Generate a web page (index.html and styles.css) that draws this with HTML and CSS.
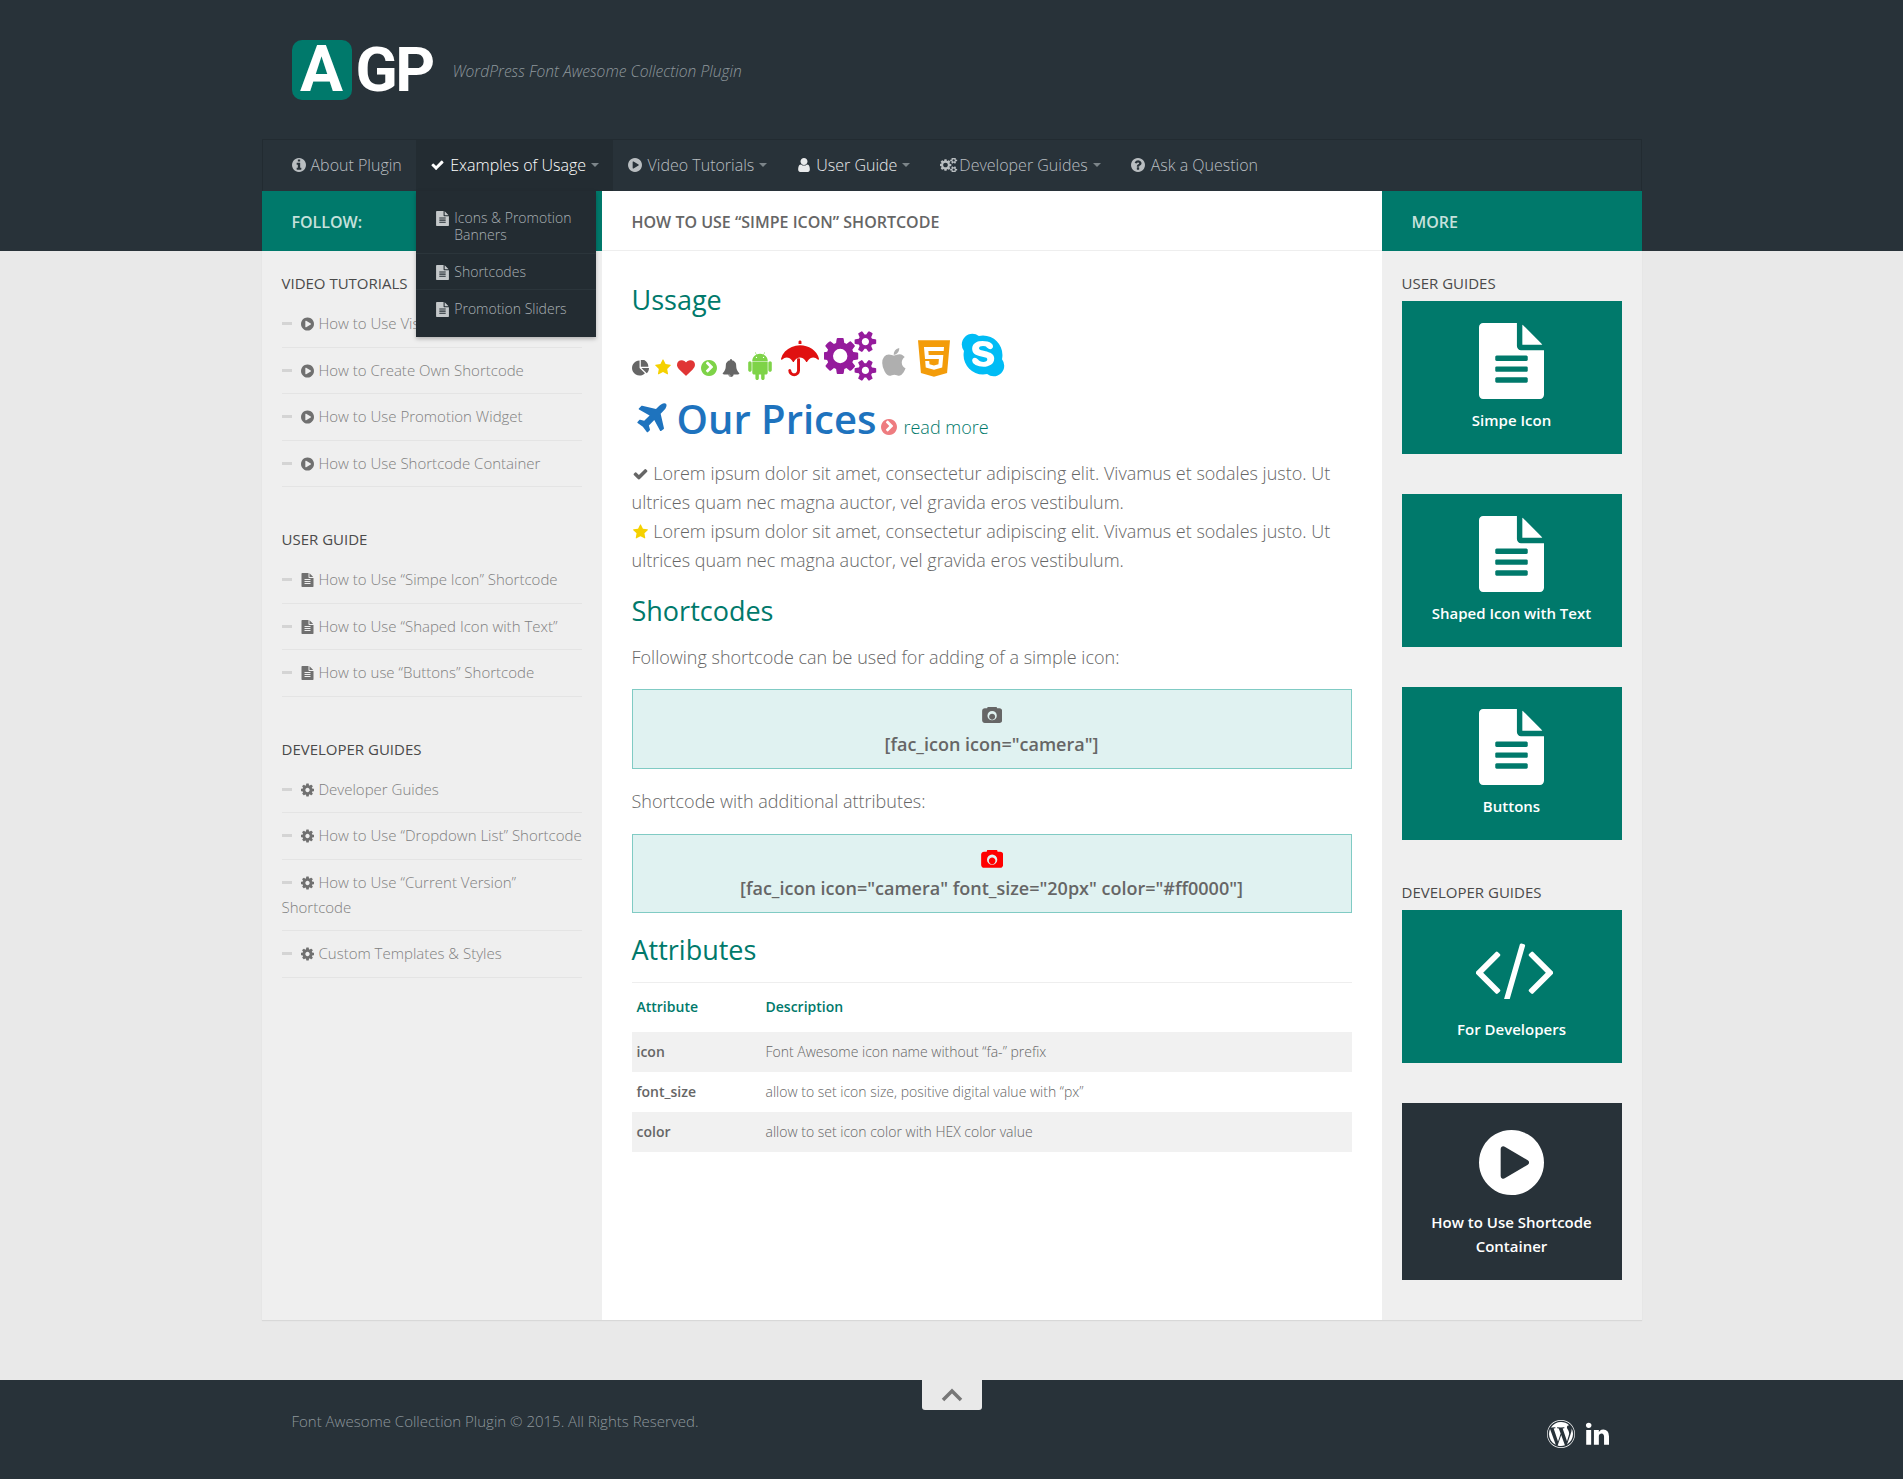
FILE: index.html
```html
<!DOCTYPE html>
<html lang="en">
<head>
<meta charset="utf-8">
<title>AGP - WordPress Font Awesome Collection Plugin</title>
<link rel="stylesheet" href="styles.css">
</head>
<body>
<svg class="defs" aria-hidden="true">
<symbol id="i-check" viewBox="0 0 1792 1792"><path d="M1671 566q0 40-28 68l-724 724-136 136q-28 28-68 28t-68-28l-136-136-362-362q-28-28-28-68t28-68l136-136q28-28 68-28t68 28l294 295 656-657q28-28 68-28t68 28l136 136q28 28 28 68z"/></symbol>
<symbol id="i-star" viewBox="0 0 1664 1792"><path d="M1664 647q0 22-26 48l-363 354 86 500q1 7 1 20 0 21-10.500 35.500t-30.500 14.500q-19 0-40-12l-449-236-449 236q-22 12-40 12-21 0-31.500-14.500t-10.500-35.500q0-6 2-20l86-500-364-354q-25-27-25-48 0-37 56-46l502-73 225-455q19-41 49-41t49 41l225 455 502 73q56 9 56 46z"/></symbol>
<symbol id="i-heart" viewBox="0 0 1792 1792"><path d="M896 1664q-26 0-44-18l-624-602q-10-8-27.500-26t-55.500-65.500-68-97.500-53.500-121-23.500-138q0-220 127-344t351-124q62 0 126.500 21.500t120 58 95.500 68.500 76 68q36-36 76-68t95.500-68.500 120-58 126.500-21.500q224 0 351 124t127 344q0 221-229 450l-623 600q-18 18-44 18z"/></symbol>
<symbol id="i-play" viewBox="128 128 1536 1536"><path d="M896 128q209 0 385.500 103t279.500 279.500 103 385.500-103 385.500-279.500 279.500-385.500 103-385.500-103-279.500-279.500-103-385.500 103-385.500 279.500-279.500 385.500-103zm384 823q32-18 32-55t-32-55l-544-320q-31-19-64-1-32 19-32 56v640q0 37 32 56 16 8 32 8 17 0 32-9z"/></symbol>
<symbol id="i-info" viewBox="128 128 1536 1536"><path d="M1152 1376v-160q0-14-9-23t-23-9h-96v-512q0-14-9-23t-23-9h-320q-14 0-23 9t-9 23v160q0 14 9 23t23 9h96v320h-96q-14 0-23 9t-9 23v160q0 14 9 23t23 9h448q14 0 23-9t9-23zm-128-896v-160q0-14-9-23t-23-9h-192q-14 0-23 9t-9 23v160q0 14 9 23t23 9h192q14 0 23-9t9-23zm640 416q0 209-103 385.500t-279.500 279.500-385.500 103-385.500-103-279.500-279.500-103-385.500 103-385.500 279.500-279.500 385.500-103 385.500 103 279.500 279.500 103 385.500z"/></symbol>
<symbol id="i-question" viewBox="128 128 1536 1536"><path d="M1024 1376v-192q0-14-9-23t-23-9h-192q-14 0-23 9t-9 23v192q0 14 9 23t23 9h192q14 0 23-9t9-23zm256-672q0-88-55.500-163t-138.500-116-170-41q-243 0-371 213-15 24 8 42l132 100q7 6 19 6 16 0 25-12 53-68 86-92 34-24 86-24 48 0 85.500 26t37.500 59q0 38-20 61t-68 45q-63 28-115.500 86.500t-52.500 125.500v36q0 14 9 23t23 9h192q14 0 23-9t9-23q0-19 21.500-49.500t54.500-49.500q32-18 49-28.500t46-35 44.500-48 28-60.500 12.500-81zm384 192q0 209-103 385.500t-279.500 279.500-385.500 103-385.500-103-279.500-279.500-103-385.500 103-385.500 279.500-279.500 385.500-103 385.500 103 279.500 279.500 103 385.500z"/></symbol>
<symbol id="i-user" viewBox="128 128 1536 1536"><path d="M1536 1399q0 109-62.500 187t-150.500 78h-854q-88 0-150.500-78t-62.500-187q0-85 8.500-160.500t31.500-152 58.500-131 94-89 134.500-34.500q131 128 313 128t313-128q76 0 134.500 34.500t94 89 58.500 131 31.500 152 8.500 160.500zm-256-887q0 159-112.500 271.500t-271.500 112.500-271.500-112.500-112.500-271.500 112.500-271.500 271.500-112.500 271.500 112.500 112.500 271.500z"/></symbol>
<symbol id="i-cog" viewBox="128 128 1536 1536"><path fill-rule="evenodd" d="M1152 896q0-106-75-181t-181-75-181 75-75 181 75 181 181 75 181-75 75-181zm512-109v222q0 12-8 23t-20 13l-185 28q-19 54-39 91 35 50 107 138 10 12 10 25t-9 23q-27 37-99 108t-94 71q-12 0-26-9l-138-108q-44 23-91 38-16 136-29 186-7 28-36 28h-222q-14 0-24.500-8.500t-11.500-21.500l-28-184q-49-16-90-37l-141 107q-10 9-25 9-14 0-25-11-126-114-165-168-7-10-7-23 0-12 8-23 15-21 51-66.500t54-70.500q-27-50-41-99l-183-27q-13-2-21-12.500t-8-23.500v-222q0-12 8-23t19-13l186-28q14-46 39-92-40-57-107-138-10-12-10-24 0-10 9-23 26-36 98.500-107.500t94.500-71.500q13 0 26 10l138 107q44-23 91-38 16-136 29-186 7-28 36-28h222q14 0 24.500 8.500t11.500 21.500l28 184q49 16 90 37l142-107q9-9 24-9 13 0 25 10 129 119 165 170 7 8 7 22 0 12-8 23-15 21-51 66.500t-54 70.500q26 50 41 98l183 28q13 2 21 12.500t8 23.500z"/></symbol>
<symbol id="i-cogs" viewBox="0 128 1920 1536"><path fill-rule="evenodd" d="M832 896q0-106-75-181t-181-75-181 75-75 181 75 181 181 75 181-75 75-181zm768 512q0-52-38-90t-90-38-90 38-38 90q0 53 37.500 90.500t90.500 37.500 90.500-37.500 37.500-90.500zm0-1024q0-52-38-90t-90-38-90 38-38 90q0 53 37.500 90.500t90.500 37.500 90.500-37.500 37.500-90.500zm-384 421v185q0 10-7 19.500t-16 10.500l-155 24q-11 35-32 76 34 48 90 115 7 11 7 20 0 12-7 19-23 30-82.500 89.500t-78.500 59.500q-11 0-21-7l-115-90q-37 19-77 31-11 108-23 155-7 24-30 24h-186q-11 0-20-7.500t-10-17.500l-23-153q-34-10-75-31l-118 89q-7 7-20 7-11 0-21-8-144-133-144-160 0-9 7-19 10-14 41-53t47-61q-23-44-35-82l-152-24q-10-1-17-9.500t-7-19.500v-185q0-10 7-19.500t16-10.500l155-24q11-35 32-76-34-48-90-115-7-11-7-20 0-12 7-20 22-30 82-89t79-59q11 0 21 7l115 90q34-18 77-32 11-108 23-154 7-24 30-24h186q11 0 20 7.500t10 17.500l23 153q34 10 75 31l118-89q8-7 20-7 11 0 21 8 144 133 144 160 0 8-7 19-12 16-42 54t-45 60q23 48 34 82l152 23q10 2 17 10.500t7 19.500zm640 533v140q0 16-149 31-12 27-30 52 51 113 51 138 0 4-4 7-122 71-124 71-8 0-46-47t-52-68q-20 2-30 2t-30-2q-14 21-52 68t-46 47q-2 0-124-71-4-3-4-7 0-25 51-138-18-25-30-52-149-15-149-31v-140q0-16 149-31 13-29 30-52-51-113-51-138 0-4 4-7 4-2 35-20t59-34 30-16q8 0 46 46.500t52 67.500q20-2 30-2t30 2q51-71 92-112l6-2q4 0 124 70 4 3 4 7 0 25-51 138 17 23 30 52 149 15 149 31zm0-1024v140q0 16-149 31-12 27-30 52 51 113 51 138 0 4-4 7-122 71-124 71-8 0-46-47t-52-68q-20 2-30 2t-30-2q-14 21-52 68t-46 47q-2 0-124-71-4-3-4-7 0-25 51-138-18-25-30-52-149-15-149-31v-140q0-16 149-31 13-29 30-52-51-113-51-138 0-4 4-7 4-2 35-20t59-34 30-16q8 0 46 46.500t52 67.500q20-2 30-2t30 2q51-71 92-112l6-2q4 0 124 70 4 3 4 7 0 25-51 138 17 23 30 52 149 15 149 31z"/></symbol>
<symbol id="i-doc" viewBox="128 0 1536 1792"><path d="M1596 476q14 14 28 36h-472v-472q22 14 36 28zm-476 164h544v1056q0 40-28 68t-68 28h-1344q-40 0-68-28t-28-68v-1600q0-40 28-68t68-28h800v544q0 40 28 68t68 28zm160 736v-64q0-14-9-23t-23-9h-704q-14 0-23 9t-9 23v64q0 14 9 23t23 9h704q14 0 23-9t9-23zm0-256v-64q0-14-9-23t-23-9h-704q-14 0-23 9t-9 23v64q0 14 9 23t23 9h704q14 0 23-9t9-23zm0-256v-64q0-14-9-23t-23-9h-704q-14 0-23 9t-9 23v64q0 14 9 23t23 9h704q14 0 23-9t9-23z"/></symbol>
<symbol id="i-camera" viewBox="0 128 1920 1536"><path fill-rule="evenodd" d="M972 768q119 0 203.500 84.500t84.500 203.500-84.500 203.500-203.500 84.500-203.500-84.500-84.500-203.500 84.500-203.500 203.500-84.500zm704-512q106 0 181 75t75 181v896q0 106-75 181t-181 75h-1408q-106 0-181-75t-75-181v-896q0-106 75-181t181-75h224l51-136q19-49 69.500-84.500t103.500-35.500h512q53 0 103.500 35.500t69.500 84.500l51 136h224zm-704 1152q185 0 316.500-131.500t131.500-316.500-131.500-316.500-316.500-131.500-316.500 131.500-131.500 316.500 131.500 316.500 316.500 131.500z"/></symbol>
<symbol id="i-plane" viewBox="128 128 1536 1536"><path d="M1568 160q44 52 12 148t-108 172l-161 161 160 696q5 19-12 33l-128 96q-7 6-19 6-4 0-7-1-15-3-21-16l-279-508-259 259 53 194q5 17-8 31l-96 96q-9 9-23 9h-2q-15-2-24-13l-189-252-252-189q-11-7-13-23-1-13 9-25l96-97q9-9 23-9 6 0 8 1l194 53 259-259-508-279q-14-8-17-24-2-16 9-27l128-128q14-13 30-8l665 159 160-160q76-76 172-108t148 12z"/></symbol>
<symbol id="i-bell" viewBox="0 0 1792 1792"><path d="M912 1696q0-16-16-16-59 0-101.500-42.500t-42.500-101.500q0-16-16-16t-16 16q0 73 51.500 124.500t124.500 51.500q16 0 16-16zm816-288q0 52-38 90t-90 38h-448q0 106-75 181t-181 75-181-75-75-181h-448q-52 0-90-38t-38-90q50-42 91-88t85-119.500 74.500-158.500 50-206 19.500-260q0-152 117-282.500t307-158.500q-8-19-8-39 0-40 28-68t68-28 68 28 28 68q0 20-8 39 190 28 307 158.500t117 282.500q0 139 19.500 260t50 206 74.500 158.500 85 119.500 91 88z"/></symbol>
<symbol id="i-chev" viewBox="128 128 1536 1536"><path fill-rule="evenodd" d="M813 1299l454-454q19-19 19-45t-19-45l-454-454q-19-19-45-19t-45 19l-102 102q-19 19-19 45t19 45l307 307-307 307q-19 19-19 45t19 45l102 102q19 19 45 19t45-19zm851-403q0 209-103 385.500t-279.500 279.500-385.500 103-385.500-103-279.500-279.500-103-385.500 103-385.500 279.500-279.500 385.500-103 385.500 103 279.500 279.500 103 385.500z"/></symbol>
<symbol id="i-pie" viewBox="0 128 1728 1536"><path d="M768 890l546 546q-106 108-247.500 168t-298.500 60q-209 0-385.500-103t-279.500-279.500-103-385.500 103-385.500 279.500-279.500 385.500-103v762zm187 6h773q0 157-60 298.500t-168 247.500zm709-128h-768v-768q209 0 385.500 103t279.500 279.500 103 385.500z"/></symbol>
<symbol id="i-android" viewBox="0 0 1408 1792"><path d="M493 483q16 0 27.500-11.500t11.500-27.500-11.500-27.500-27.500-11.500-27 11.500-11 27.500 11 27.500 27 11.500zm422 0q16 0 27-11.500t11-27.500-11-27.500-27-11.500-27.500 11.500-11.500 27.500 11.500 27.500 27.500 11.500zm-812 184q42 0 72 30t30 72v430q0 43-29.500 73t-72.500 30-73-30-30-73v-430q0-42 30-72t73-30zm1060 19v666q0 46-32 78t-77 32h-75v227q0 43-30 73t-73 30-73-30-30-73v-227h-138v227q0 43-30 73t-73 30q-42 0-72-30t-30-73l-1-227h-74q-46 0-78-32t-32-78v-666h918zm-232-405q107 55 171 153.500t64 215.500h-925q0-117 64-215.500t172-153.500l-71-131q-7-13 5-20 13-6 20 6l72 132q95-42 201-42t201 42l72-132q7-12 20-6 12 7 5 20zm477 488v430q0 43-30 73t-73 30q-42 0-72-30t-30-73v-430q0-43 30-72.500t72-29.500q43 0 73 29.500t30 72.500z"/></symbol>
<symbol id="i-umbrella" viewBox="0 0 1664 1792"><path d="M832 853v522q0 104-76 180t-180 76-180-76-76-180q0-26 19-45t45-19 45 19 19 45q0 50 39 89t89 39 89-39 39-89v-522q33-11 64-11t64 11zm832 22q0 13-9.500 22.500t-22.500 9.500q-11 0-23-10-49-46-93-69t-102-23q-68 0-128 37t-103 97q-7 10-17.500 28t-14.500 24q-11 17-28 17-18 0-29-17-4-6-14.500-24t-17.500-28q-43-60-102.500-97t-127.500-37-127.500 37-102.500 97q-7 10-17.500 28t-14.500 24q-11 17-29 17-17 0-28-17-4-6-14.500-24t-17.500-28q-43-60-103-97t-128-37q-58 0-102 23t-93 69q-12 10-23 10-13 0-22.500-9.500t-9.500-22.500q0-5 1-7 45-183 172.500-319.500t298-204.500 360.500-68q140 0 274.500 40t246.500 113.500 194.500 187 115.500 251.500q1 2 1 7zm-768-751v98q-42-2-64-2t-64 2v-98q0-26 19-45t45-19 45 19 19 45z"/></symbol>
<symbol id="i-apple" viewBox="0 0 1408 1792"><path d="M1393 1215q-39 125-123 250-129 196-257 196-49 0-140-32-86-32-151-32-61 0-142 33-81 34-132 34-152 0-301-259-147-261-147-503 0-228 113-374 113-144 284-144 72 0 177 30 104 30 138 30 45 0 143-34 102-34 173-34 119 0 213 65 52 36 104 100-79 67-114 118-65 94-65 207 0 124 69 223t158 126zm-376-1173q0 61-29 136-30 75-93 138-54 54-108 72-37 11-104 17 3-149 78-257 74-107 250-148 1 3 2.500 11t2.500 11q0 4 .5 10t.5 10z"/></symbol>
<symbol id="i-html5" viewBox="0 128 1408 1602"><path fill-rule="evenodd" d="M1130 597l16-175h-884l47 534h612l-22 228-197 53-196-53-13-140h-175l22 278 362 100h4v-1l359-99 50-544h-644l-15-181h674zm-1130-469h1408l-128 1438-578 162-574-162z"/></symbol>
<symbol id="i-skype" viewBox="0 64 1536 1664"><path fill-rule="evenodd" d="M1173 1063q0-50-19.500-91.500t-48.500-68.500-73-49-82.500-34-87.500-23l-104-24q-30-7-44-10.500t-35-11.500-30-16-16.500-21-7.500-30q0-77 144-77 43 0 77 12t54 28.500 38 33.500 40 29 48 12q47 0 75.500-32t28.500-77q0-55-56-99.500t-142-67.500-182-23q-68 0-132 15.500t-119.500 47-89 87-33.500 128.500q0 61 19 106.500t56 75.500 80 48.500 103 32.500l146 36q90 22 112 36 32 20 32 60 0 39-40 64.500t-105 25.500q-51 0-91.500-16t-65-38.500-45.500-45-46-38.500-54-16q-50 0-75.500 30t-25.500 75q0 92 122 157.500t291 65.500q73 0 140-18.500t122.500-53.500 88.500-93.500 33-131.500zm363 255q0 159-112.500 271.500t-271.500 112.500q-130 0-234-80-77 16-150 16-143 0-273.500-55.500t-225-150-150-225-55.500-273.500q0-73 16-150-80-104-80-234 0-159 112.500-271.500t271.500-112.500q130 0 234 80 77-16 150-16 143 0 273.500 55.500t225 150 150 225 55.500 273.500q0 73-16 150 80 104 80 234z"/></symbol>
<symbol id="i-code" viewBox="55 240 1810 1312"><path d="M617 1399l-50 50q-10 10-23 10t-23-10l-466-466q-10-10-10-23t10-23l466-466q10-10 23-10t23 10l50 50q10 10 10 23t-10 23l-393 393 393 393q10 10 10 23t-10 23zm591-1067l-373 1291q-4 13-15.500 19.500t-23.500 2.500l-62-17q-13-4-19.500-15.500t-2.500-24.500l373-1291q4-13 15.500-19.500t23.500-2.500l62 17q13 4 19.500 15.500t2.500 24.500zm657 651l-466 466q-10 10-23 10t-23-10l-50-50q-10-10-10-23t10-23l393-393-393-393q-10-10-10-23t10-23l50-50q10-10 23-10t23 10l466 466q10 10 10 23t-10 23z"/></symbol>
<symbol id="i-wp" viewBox="0 0 1792 1792"><path fill-rule="evenodd" d="M127 896q0-163 67-313l367 1005q-196-95-315-281t-119-411zm1288-39q0 19-2.500 38.500t-10 49.500-11.500 44-17.500 59-17.500 58l-76 256-278-826q46-3 88-8 19-2 26-18.500t-2.500-31-28.500-13.500l-205 10q-75-1-202-10-12-1-20.500 5t-11.500 15-1.500 18.500 9 16.500 19.500 8l80 8 120 328-168 504-280-832q46-3 88-8 19-2 26-18.500t-2.500-31-28.500-13.500l-205 10q-7 0-23-.5t-26-.5q105-160 274.500-253.500t367.500-93.500q147 0 280.500 53t238.500 149h-10q-55 0-92 40.500t-37 95.500q0 12 2 24t4 21.500 8 23 9 21 12 22.500 12.500 21 14.500 24 14 23q63 107 63 212zm-506 106l237 647q1 6 5 11-126 44-255 44-112 0-217-32zm661-436q95 174 95 369 0 209-104 385.500t-279 278.500l235-678q59-169 59-276 0-42-6-79zm-674-527q182 0 348 71t286 191 191 286 71 348-71 348-191 286-286 191-348 71-348-71-286-191-191-286-71-348 71-348 191-286 286-191 348-71zm0 1751q173 0 331.500-68t273-182.500 182.500-273 68-331.500-68-331.500-182.500-273-273-182.500-331.500-68-331.500 68-273 182.500-182.500 273-68 331.500 68 331.500 182.500 273 273 182.500 331.500 68z"/></symbol>
<symbol id="i-in" viewBox="0 128 1664 1536"><path d="M477 625v991h-330v-991h330zm21-306q1 73-50.500 122t-135.500 49h-2q-82 0-132-49t-50-122q0-74 51.500-122.500t134.500-48.500 133 48.500 51 122.500zm1166 729v568h-329v-530q0-105-40.500-164.500t-126.500-59.500q-63 0-105.500 34.500t-63.500 85.500q-11 30-11 81v553h-329q2-399 2-647t-1-296l-1-48h329v144h-2q20-32 41-56t56.500-52 87-43.500 114.500-15.500q171 0 275 113.500t104 332.500z"/></symbol>
</svg>

<div class="wrap">
  <header class="brand">
    <div class="logo"><span class="logo-a">A</span><span class="logo-gp">GP</span></div>
    <p class="tagline">WordPress Font Awesome Collection Plugin</p>
  </header>

  <nav class="nav">
    <a class="nav-item first"><svg class="ni"><use href="#i-info"/></svg>About Plugin</a>
    <div class="nav-item active"><svg class="ni"><use href="#i-check"/></svg>Examples of Usage<i class="caret"></i>
      <ul class="drop">
        <li><svg class="di"><use href="#i-doc"/></svg><span>Icons &amp; Promotion Banners</span></li>
        <li><svg class="di"><use href="#i-doc"/></svg><span>Shortcodes</span></li>
        <li><svg class="di"><use href="#i-doc"/></svg><span>Promotion Sliders</span></li>
      </ul>
    </div>
    <a class="nav-item"><svg class="ni"><use href="#i-play"/></svg>Video Tutorials<i class="caret"></i></a>
    <a class="nav-item bright"><svg class="ni"><use href="#i-user"/></svg>User Guide<i class="caret"></i></a>
    <a class="nav-item"><svg class="ni wide"><use href="#i-cogs"/></svg>Developer Guides<i class="caret"></i></a>
    <a class="nav-item"><svg class="ni"><use href="#i-question"/></svg>Ask a Question</a>
  </nav>

  <div class="cols">
    <aside class="left">
      <div class="bar bar-teal bar-left">FOLLOW:</div>
      <div class="side">
        <h4 class="side-title">VIDEO TUTORIALS</h4>
        <ul class="links">
          <li><i class="dash"></i><svg class="li"><use href="#i-play"/></svg>How to Use Visual Editor</li>
          <li><i class="dash"></i><svg class="li"><use href="#i-play"/></svg>How to Create Own Shortcode</li>
          <li><i class="dash"></i><svg class="li"><use href="#i-play"/></svg>How to Use Promotion Widget</li>
          <li><i class="dash"></i><svg class="li"><use href="#i-play"/></svg>How to Use Shortcode Container</li>
        </ul>
        <h4 class="side-title">USER GUIDE</h4>
        <ul class="links">
          <li><i class="dash"></i><svg class="li"><use href="#i-doc"/></svg>How to Use “Simpe Icon” Shortcode</li>
          <li><i class="dash"></i><svg class="li"><use href="#i-doc"/></svg>How to Use “Shaped Icon with Text”</li>
          <li><i class="dash"></i><svg class="li"><use href="#i-doc"/></svg>How to use “Buttons” Shortcode</li>
        </ul>
        <h4 class="side-title">DEVELOPER GUIDES</h4>
        <ul class="links">
          <li><i class="dash"></i><svg class="li"><use href="#i-cog"/></svg>Developer Guides</li>
          <li class="nowrap"><i class="dash"></i><svg class="li"><use href="#i-cog"/></svg>How to Use “Dropdown List” Shortcode</li>
          <li><i class="dash"></i><svg class="li"><use href="#i-cog"/></svg>How to Use “Current Version” Shortcode</li>
          <li><i class="dash"></i><svg class="li"><use href="#i-cog"/></svg>Custom Templates &amp; Styles</li>
        </ul>
      </div>
    </aside>

    <main class="center">
      <div class="bar bar-title">HOW TO USE “SIMPE ICON” SHORTCODE</div>
      <div class="content">
        <h2 class="h-first">Ussage</h2>
        <div class="icon-row">
          <svg class="r-pie"><use href="#i-pie"/></svg>
          <svg class="r-star"><use href="#i-star"/></svg>
          <svg class="r-heart"><use href="#i-heart"/></svg>
          <svg class="r-chev"><use href="#i-chev"/></svg>
          <svg class="r-bell"><use href="#i-bell"/></svg>
          <svg class="r-android"><use href="#i-android"/></svg>
          <svg class="r-umbrella"><use href="#i-umbrella"/></svg>
          <svg class="r-cogs"><use href="#i-cogs"/></svg>
          <svg class="r-apple"><use href="#i-apple"/></svg>
          <svg class="r-html5"><use href="#i-html5"/></svg>
          <svg class="r-skype"><use href="#i-skype"/></svg>
        </div>
        <div class="prices">
          <svg class="p-plane"><use href="#i-plane"/></svg>
          <span class="p-title">Our Prices</span>
          <svg class="p-chev"><use href="#i-chev"/></svg>
          <span class="p-more">read more</span>
        </div>
        <p class="lorem"><svg class="l-check"><use href="#i-check"/></svg> Lorem ipsum dolor sit amet, consectetur adipiscing elit. Vivamus et sodales justo. Ut ultrices quam nec magna auctor, vel gravida eros vestibulum.</p>
        <p class="lorem"><svg class="l-star"><use href="#i-star"/></svg> Lorem ipsum dolor sit amet, consectetur adipiscing elit. Vivamus et sodales justo. Ut ultrices quam nec magna auctor, vel gravida eros vestibulum.</p>
        <h2 class="h-short">Shortcodes</h2>
        <p class="lead">Following shortcode can be used for adding of a simple icon:</p>
        <div class="code-box">
          <svg class="c-cam"><use href="#i-camera"/></svg>
          <span>[fac_icon icon="camera"]</span>
        </div>
        <p class="lead lead-2">Shortcode with additional attributes:</p>
        <div class="code-box box-2">
          <svg class="c-cam red"><use href="#i-camera"/></svg>
          <span>[fac_icon icon="camera" font_size="20px" color="#ff0000"]</span>
        </div>
        <h2 class="h-attr">Attributes</h2>
        <table class="attrs">
          <thead><tr><th>Attribute</th><th>Description</th></tr></thead>
          <tbody>
            <tr><td>icon</td><td>Font Awesome icon name without “fa-” prefix</td></tr>
            <tr><td>font_size</td><td>allow to set icon size, positive digital value with “px”</td></tr>
            <tr><td>color</td><td>allow to set icon color with HEX color value</td></tr>
          </tbody>
        </table>
      </div>
    </main>

    <aside class="right">
      <div class="bar bar-teal bar-right">MORE</div>
      <div class="side side-r">
        <h4 class="side-title">USER GUIDES</h4>
        <a class="tile"><svg class="t-doc"><use href="#i-doc"/></svg><span>Simpe Icon</span></a>
        <a class="tile"><svg class="t-doc"><use href="#i-doc"/></svg><span>Shaped Icon with Text</span></a>
        <a class="tile"><svg class="t-doc"><use href="#i-doc"/></svg><span>Buttons</span></a>
        <h4 class="side-title t2">DEVELOPER GUIDES</h4>
        <a class="tile tile-code"><svg class="t-code"><use href="#i-code"/></svg><span>For Developers</span></a>
        <a class="tile tile-dark"><svg class="t-play"><use href="#i-play"/></svg><span>How to Use Shortcode Container</span></a>
      </div>
    </aside>
  </div>
</div>

<footer class="footer">
  <a class="to-top"><svg viewBox="0 0 22 14"><polyline points="2,12 11,3 20,12"/></svg></a>
  <div class="foot-in">
    <p class="copy">Font Awesome Collection Plugin © 2015. All Rights Reserved.</p>
    <div class="social">
      <svg class="s-wp"><use href="#i-wp"/></svg>
      <svg class="s-in"><use href="#i-in"/></svg>
    </div>
  </div>
</footer>
</body>
</html>
```
FILE: styles.css
```css
* { box-sizing: border-box; }
html, body { margin: 0; padding: 0; }
body {
  font-family: "Open Sans", "Liberation Sans", sans-serif;
  font-weight: 300;
  color: #666;
  background: linear-gradient(#283239 251px, #e9e9e9 251px);
  min-height: 1479px;
}
h2, h4, p, ul { margin: 0; padding: 0; }
ul { list-style: none; }
svg { fill: currentColor; flex: none; }
.defs { width: 0; height: 0; position: absolute; }

.wrap { width: 1380px; margin: 0 auto; }

/* Brand */
.brand { height: 139px; display: flex; align-items: flex-start; padding: 40px 0 0 30px; }
.logo { display: flex; width: 161px; height: 60px; color: #fff; font-family: Roboto, sans-serif; font-weight: 700; font-size: 62px; line-height: 60px; }
.logo-a { width: 60px; height: 60px; background: #00796b; border-radius: 10px; text-align: center; font-size: 64px; }
.logo-gp { margin-left: 4px; letter-spacing: -2.5px; }
.tagline { font-size: 15.6px; font-style: italic; color: #8e979c; line-height: 22px; margin-top: 20px; }

/* Nav */
.nav { height: 52px; display: flex; border: 1px solid #222b31; border-bottom: 0; position: relative; }
.nav-item { display: flex; align-items: center; padding: 0 14.5px 2px; font-size: 16px; color: #b9bec1; position: relative; white-space: nowrap; }
.nav-item.first { padding-left: 29px; padding-right: 14.5px; }
.nav-item.active { background: #232c32; color: #fff; padding-left: 14px; padding-right: 13px; }
.nav-item.bright { color: #e8eaeb; }
.ni { width: 14px; height: 14px; margin-right: 6px; }
.first .ni, .bright .ni { margin-right: 5px; }
.ni.wide { width: 18px; margin-right: 1px; }
.nav-item.active .ni { width: 15px; margin-right: 5px; }
.caret { width: 0; height: 0; border: 4px solid transparent; border-top-color: #7c858a; border-bottom: 0; margin: 0 1px 0 5px; }
.drop { position: absolute; left: 0; top: 51px; width: 180px; background: #232c32; padding: 10px 0 11px; box-shadow: 0 2px 4px rgba(0,0,0,.25); z-index: 5; }
.drop li { display: flex; padding: 9px 14px 9px 20px; font-size: 14px; line-height: 17px; color: #a9b0b4; border-top: 1px solid #2b353b; white-space: normal; }
.drop li:first-child { border-top: 0; padding-top: 8px; padding-bottom: 10px; }
.drop li + li + li { padding-top: 10px; }
.di { width: 13px; height: 15px; margin: 2px 5px 0 0; color: #c4c8ca; }

/* Columns */
.cols { display: grid; grid-template-columns: 340px 780px 260px; height: 1129px; box-shadow: 0 1px 1px rgba(0,0,0,.07); }
.left, .right { background: #efefef; }
.center { background: #fff; }
.bar { height: 60px; display: flex; align-items: center; padding-top: 2px; font-size: 16px; font-weight: 600; }
.bar-teal { background: #00796b; color: #c6e1dc; }
.bar-left { padding-left: 30px; }
.bar-right { padding-left: 30px; }
.bar-title { padding-left: 30px; color: #666; border-bottom: 1px solid #eee; }

.side { padding: 20px 20px 0; }
.side-title { font-size: 15px; font-weight: 400; line-height: 24px; color: #4a4a4a; margin-bottom: 6px; }
.links { margin-bottom: 40px; width: 300px; }
.links:last-child { margin-bottom: 0; }
.links li { font-size: 15px; line-height: 25px; padding: 10px 0 10.500px; border-bottom: 1px solid #e4e4e4; color: #808080; }
.links li.nowrap { white-space: nowrap; }
.dash { display: inline-block; width: 10px; height: 3px; background: #d4d4d4; margin-right: 9px; vertical-align: 4px; }
.li { width: 13px; height: 14px; margin-right: 5px; vertical-align: -2px; color: #707070; }

/* Center */
.content { padding: 0 30px; }
h2 { font-weight: 400; font-size: 27px; line-height: 38px; color: #00796b; }
.h-first { margin-top: 30px; }
.icon-row { display: flex; align-items: flex-end; height: 51px; margin-top: 9px; }
.icon-row svg { display: block; }
.r-pie { width: 17px; height: 16px; color: #666; margin-bottom: 3px; }
.r-star { width: 18px; height: 17px; color: #f5d100; margin: 0 0 3px 5px; }
.r-heart { width: 18px; height: 18px; color: #e03535; margin: 0 0 2px 5px; }
.r-chev { width: 16px; height: 16px; color: #7ed348; margin: 0 0 3px 6px; }
.r-bell { width: 18px; height: 20px; color: #666; margin: 0 0 1px 5px; }
.r-android { width: 24px; height: 30px; color: #7ed348; margin: 0 0 -1px 8px; }
.r-umbrella { width: 38px; height: 41px; color: #e01010; margin: 0 0 -1px 9px; }
.r-cogs { width: 54px; height: 50px; color: #951b9c; margin: 0 0 -2px 5px; }
.r-apple { width: 24px; height: 30px; color: #afafaf; margin: 0 0 1px 4px; }
.r-html5 { width: 32px; height: 37px; color: #f39c0a; margin: 0 0 2px 12px; }
.r-skype { width: 44px; height: 46px; color: #00bcf5; margin: 0 0 2px 11px; }

.prices { display: flex; align-items: center; height: 58px; margin-top: 11px; color: #1e73be; }
.p-plane { width: 32px; height: 32px; margin: 0 9px 0 4px; }
.p-title { font-size: 40px; font-weight: 600; line-height: 58px; color: #1e73be; }
.p-chev { width: 16px; height: 16px; color: #ee7c80; margin: 16px 6px 0 5px; }
.p-more { font-size: 18px; color: #00796b; margin-top: 16px; }

.lorem { font-size: 18px; line-height: 29px; color: #666; }
.prices + .lorem { margin-top: 11px; }
.l-check { width: 17px; height: 16px; vertical-align: -2px; }
.l-star { width: 17px; height: 16px; vertical-align: -2px; color: #f5d100; }

.h-short { margin-top: 17px; }
.lead { font-size: 18px; line-height: 29px; margin-top: 13px; }
.code-box { display: flex; flex-direction: column; align-items: center; justify-content: center; height: 80px; margin-top: 17px; background: #e0f2f1; border: 1px solid #80cbc4; font-size: 18px; font-weight: 600; color: #666; line-height: 28px; }
.code-box.box-2 { height: 79px; margin-top: 18px; }
.code-box + .lead { margin-top: 18px; }
.c-cam { width: 20px; height: 16px; margin: 7px 0 7px; }
.c-cam.red { width: 22px; height: 18px; color: #f00; margin: 5px 0 6px; }
.h-attr { margin-top: 18px; }
.attrs { width: 100%; border-collapse: collapse; margin-top: 13px; border-top: 1px solid #eee; font-size: 14px; }
.attrs th { text-align: left; color: #00796b; font-weight: 600; height: 49px; padding: 0 5px 2px; }
.attrs td { height: 40px; padding: 0 5px; }
.attrs th:first-child, .attrs td:first-child { width: 129px; }
.attrs td:first-child { font-weight: 600; }
.attrs tbody tr:nth-child(odd) { background: #f1f1f1; }

/* Right */
.tile { display: flex; flex-direction: column; align-items: center; width: 220px; height: 153px; margin-bottom: 40px; background: #00796b; color: #fff; font-size: 15px; font-weight: 600; line-height: 24px; text-align: center; padding-top: 22px; }
.tile span { margin-top: 9px; }
.t-doc { width: 65px; height: 76px; }
.tile-code { padding-top: 31px; }
.t-code { width: 77px; height: 58px; margin-left: 6px; }
.tile-code span { margin-top: 18px; }
.tile-dark { height: 177px; background: #283239; padding-top: 27px; margin-bottom: 0; }
.tile-dark span { width: 180px; margin-top: 15px; }
.t-play { width: 65px; height: 65px; }

/* Footer */
.footer { height: 99px; margin-top: 60px; background: #283239; position: relative; }
.to-top { position: absolute; left: 922px; top: 0; width: 60px; height: 30px; background: #e9e9e9; border-radius: 0 0 3px 3px; display: flex; align-items: center; justify-content: center; }
.to-top svg { width: 22px; height: 14px; fill: none; stroke: #777; stroke-width: 3.500; }
.foot-in { width: 1380px; margin: 0 auto; display: flex; justify-content: space-between; padding: 0 33px 0 30px; }
.copy { font-size: 15px; line-height: 24px; color: #8e979c; margin-top: 29px; }
.social { display: flex; align-items: center; margin-top: 40px; height: 28px; color: #fff; }
.s-wp { width: 28px; height: 28px; }
.s-in { width: 25px; height: 24px; margin-left: 9px; }
```
